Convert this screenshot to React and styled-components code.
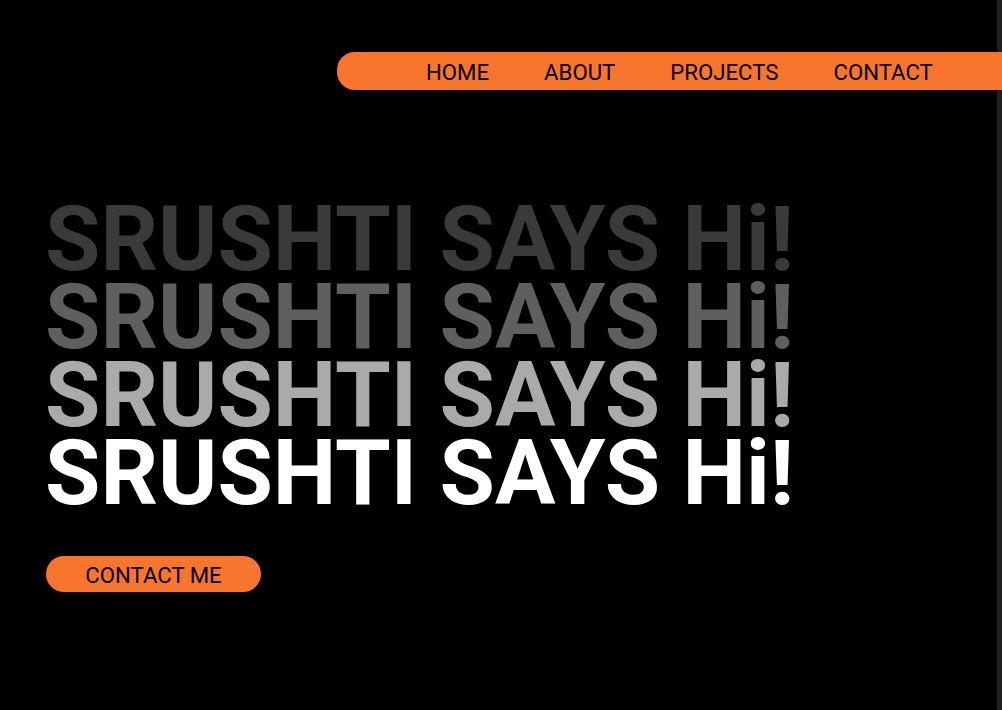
import styled, { createGlobalStyle } from "styled-components";

const GlobalStyle = createGlobalStyle`
  html, body {
    margin: 0;
    padding: 0;
    background: #000;
  }
  body {
    font-family: Roboto, "Liberation Sans", sans-serif;
  }
`;

const Page = styled.div`
  min-height: 710px;
  box-sizing: border-box;
  padding-top: 52px;
  background: #000;
  box-shadow: inset -5px 0 0 #1f1f1f;
  overflow: hidden;
`;

const Header = styled.header`
  display: flex;
  justify-content: flex-end;
`;

const Nav = styled.nav`
  width: 665px;
  height: 38px;
  display: flex;
  align-items: center;
  gap: 55px;
  padding: 2px 0 0 89px;
  box-sizing: border-box;
  background: #f8752e;
  border-radius: 18px 0 0 18px;
`;

const NavLink = styled.a`
  color: #000;
  font-size: 22.2px;
  font-weight: 400;
  text-decoration: none;
  line-height: 1;
  cursor: pointer;
`;

const Hero = styled.section`
  padding: 111px 0 0 46px;
  display: flex;
  flex-direction: column;
  align-items: flex-start;
`;

const Headline = styled.h1`
  margin: 0 0 0 -1px;
  font-size: 90px;
  font-weight: 700;
  line-height: 78px;
  white-space: nowrap;
  color: ${(p) => p.$shade};
`;

const ContactButton = styled.button`
  margin-top: 43px;
  width: 215px;
  height: 36px;
  border: none;
  border-radius: 18px;
  background: #f8752e;
  color: #000;
  font-family: Roboto, "Liberation Sans", sans-serif;
  font-size: 22.2px;
  font-weight: 400;
  padding: 2px 0 0;
  cursor: pointer;
`;

const shades = ["#3a3a3a", "#5f5f5f", "#aaaaaa", "#ffffff"];

export default function App() {
  return (
    <>
      <GlobalStyle />
      <Page>
        <Header>
          <Nav>
            <NavLink>HOME</NavLink>
            <NavLink>ABOUT</NavLink>
            <NavLink>PROJECTS</NavLink>
            <NavLink>CONTACT</NavLink>
          </Nav>
        </Header>
        <Hero>
          <div>
            {shades.map((s) => (
              <Headline key={s} $shade={s}>
                SRUSHTI SAYS Hi!
              </Headline>
            ))}
          </div>
          <ContactButton>CONTACT ME</ContactButton>
        </Hero>
      </Page>
    </>
  );
}
